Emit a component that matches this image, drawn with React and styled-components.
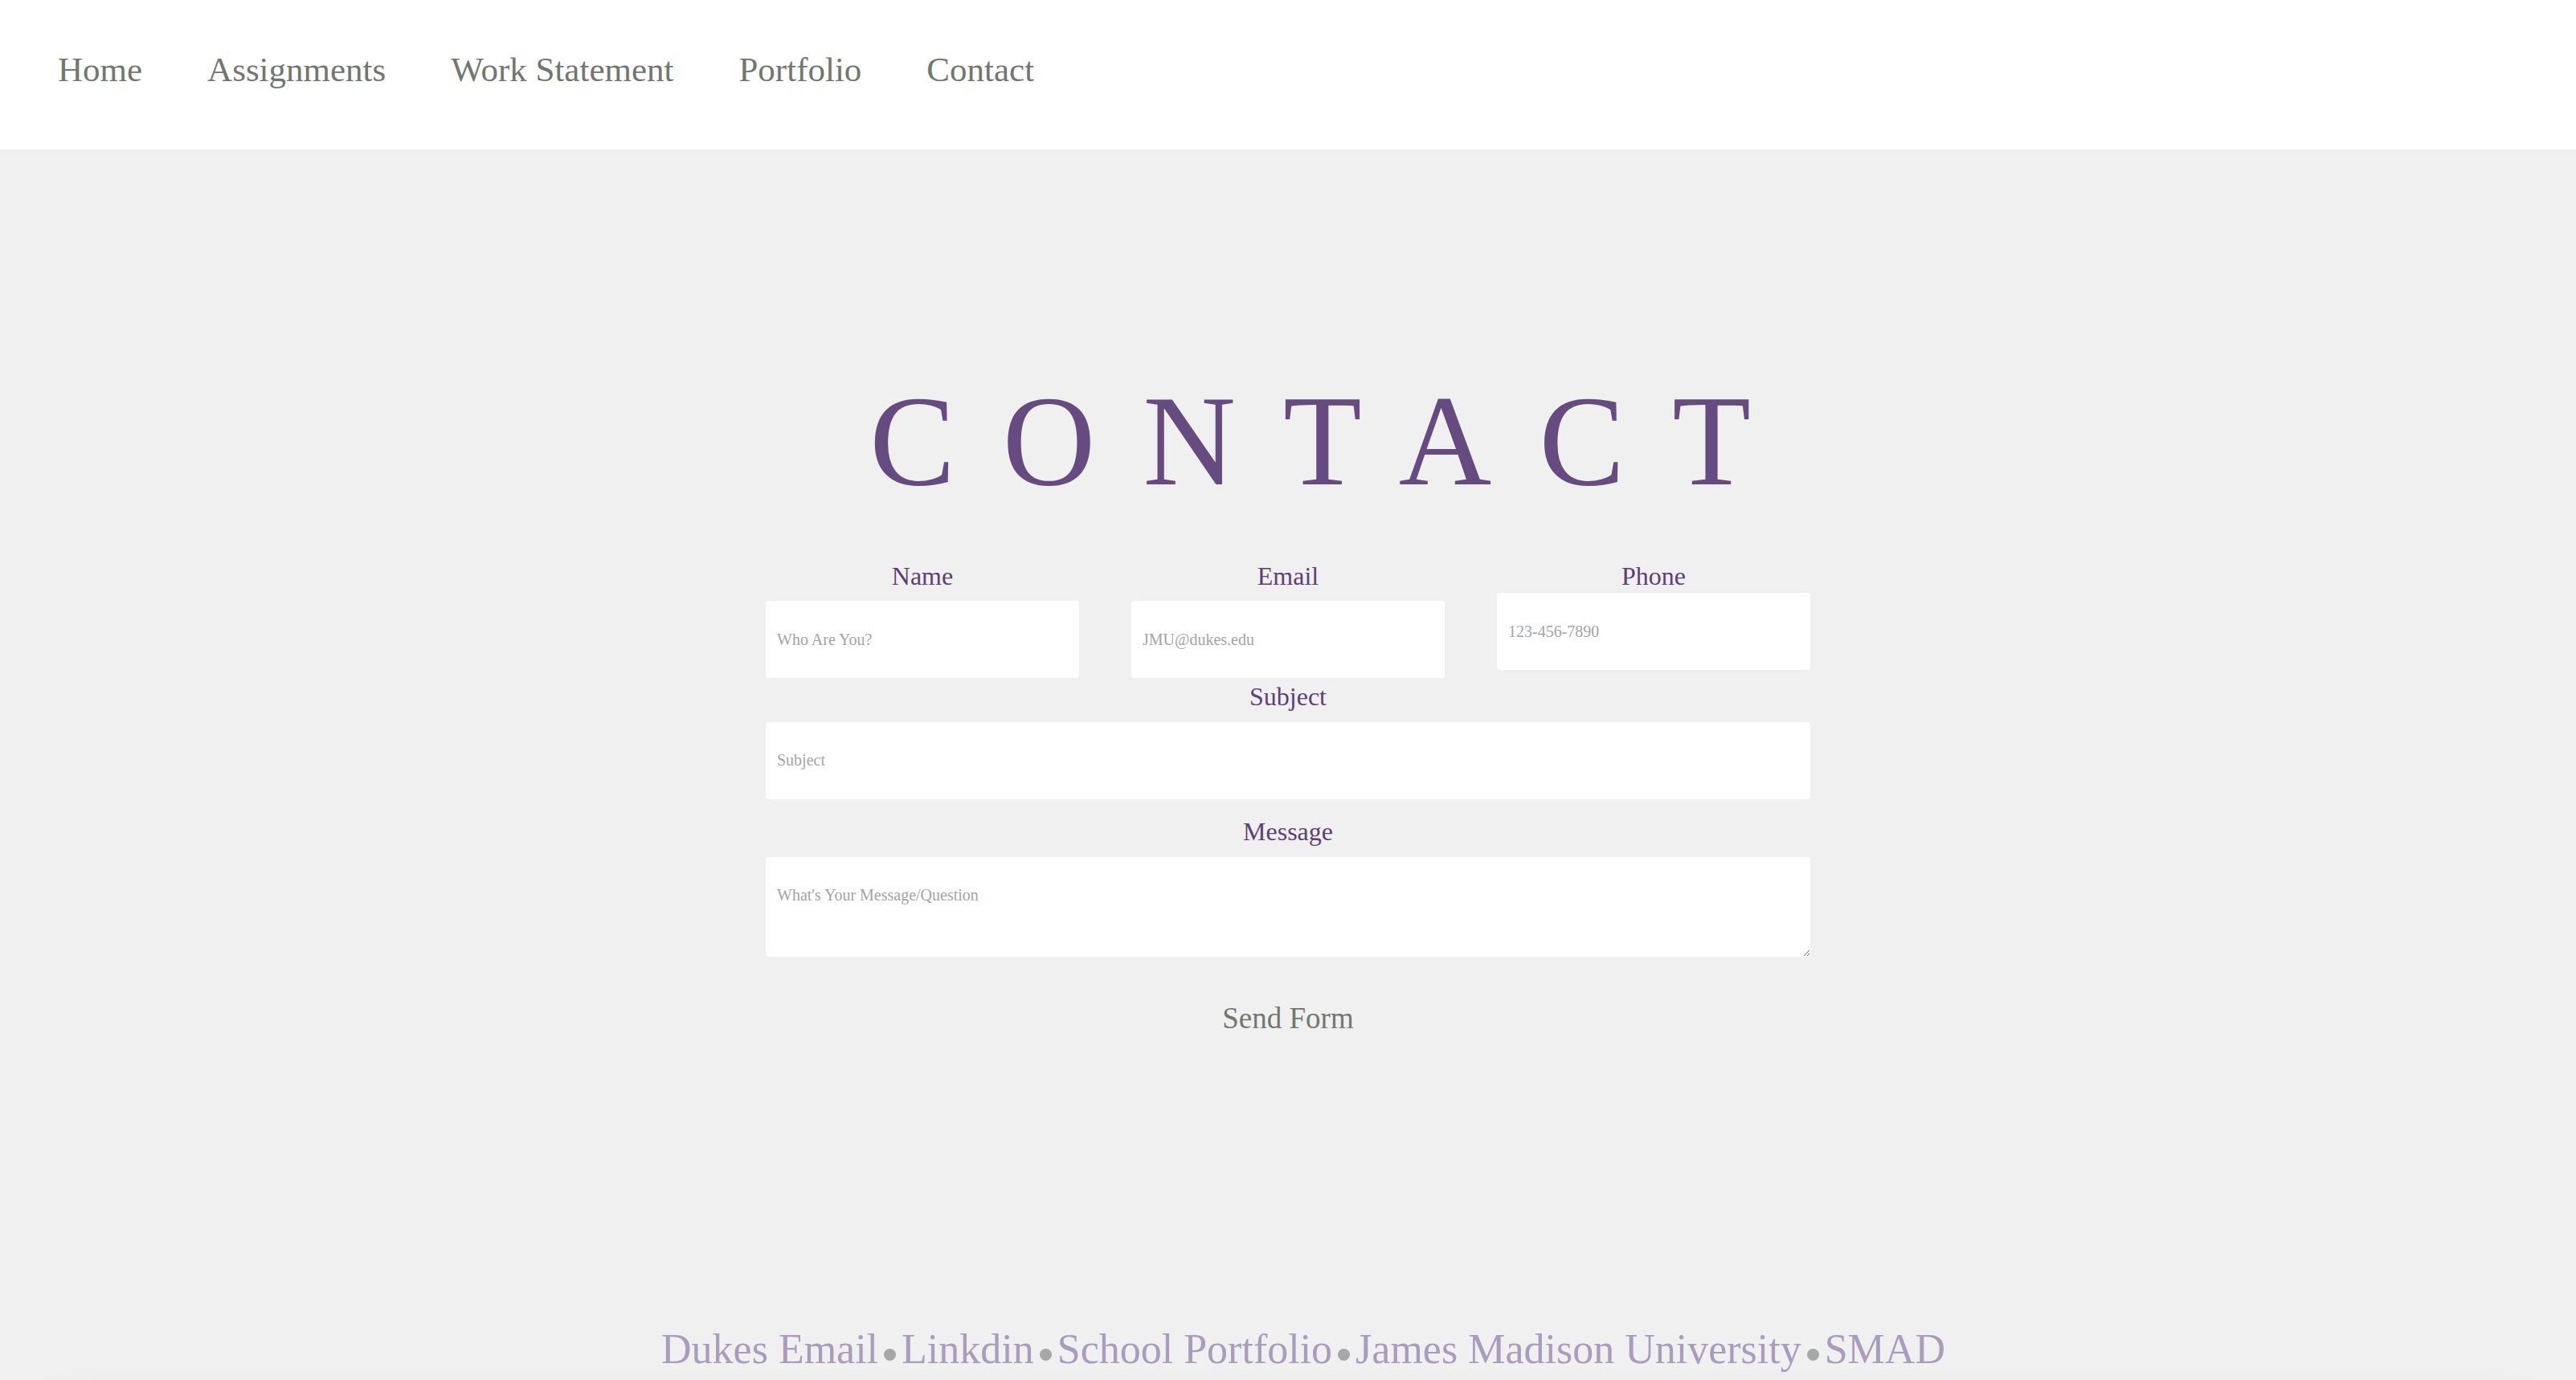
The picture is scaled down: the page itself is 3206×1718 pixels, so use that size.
import React from "react";
import styled, {createGlobalStyle} from "styled-components";

const GlobalStyle = createGlobalStyle`
body {
    margin: 0;
    background: #f0f0f0;
    font-family: "Liberation Serif", "Times New Roman", serif;
}
`;

const Nav = styled.nav`
display: flex;
align-items: center;
gap: 81px;
height: 186px;
padding: 0 0 14px 72px;
box-sizing: border-box;
background: #fff;
`;

const NavLink = styled.a`
font-size: 43px;
color: #71766f;
text-decoration: none;
cursor: pointer;
`;

const Title = styled.h1`
margin: 283px 0 0;
padding-left: 114px;
text-align: center;
font-size: 160px;
font-weight: normal;
line-height: 160px;
letter-spacing: 59px;
color: #654b80;
`;

const Form = styled.form`
display: flex;
flex-direction: column;
width: 1300px;
margin: 69px auto 0;
`;

const Row = styled.div`
display: grid;
grid-template-columns: repeat(3, 1fr);
column-gap: 65px;
`;

const Field = styled.div`
display: flex;
flex-direction: column;
margin-top: ${p => p.$top || 0}px;
`;

const Label = styled.label`
font-size: 32px;
line-height: 1.2;
text-align: center;
color: #5b4176;
`;

const Input = styled.input`
height: 96px;
margin-top: ${p => p.$gap ?? 12}px;
padding: 0 14px;
box-sizing: border-box;
border: none;
border-radius: 4px;
background: #fff;
font-family: inherit;
font-size: 20px;
outline: none;

&::placeholder {
    color: #a4a4a4;
}
`;

const TextArea = styled.textarea`
display: block;
height: 124px;
margin-top: 13px;
padding: 36px 14px 10px;
box-sizing: border-box;
border: none;
border-radius: 4px;
background: #fff;
font-family: inherit;
font-size: 20px;
resize: vertical;
outline: none;

&::placeholder {
    color: #a4a4a4;
}
`;

const SendButton = styled.button`
align-self: center;
margin-top: 55px;
padding: 0;
border: none;
background: none;
font-family: inherit;
font-size: 37px;
line-height: 1.2;
color: #72776f;
cursor: pointer;
`;

const Footer = styled.footer`
margin-top: 358px;
padding-left: 38px;
text-align: center;
font-size: 52px;
line-height: 1.2;
color: #aa9cbc;
white-space: nowrap;
`;

const Dot = styled.span`
display: inline-block;
width: 15px;
height: 15px;
margin: 0 7px 0 7px;
border-radius: 50%;
background: #a5a7a8;
vertical-align: 3px;
`;

const Shade = styled.div`
height: 200px;
margin: 24px 30px 0;
border-radius: 60px;
box-shadow: 0 -6px 40px rgba(0, 0, 0, 0.035);
`;

const links = ["Dukes Email", "Linkdin", "School Portfolio", "James Madison University", "SMAD"];

const TextField = ({name, text, placeholder, top, gap}) => (
    <Field $top={top}>
        <Label htmlFor={name}>{text}</Label>
        <Input id={name} name={name} placeholder={placeholder} $gap={gap}/>
    </Field>
);

export default function App() {
    return <>
        <GlobalStyle/>
        <Nav>
            {["Home", "Assignments", "Work Statement", "Portfolio", "Contact"].map(l =>
                <NavLink key={l}>{l}</NavLink>)}
        </Nav>
        <Title>CONTACT</Title>
        <Form onSubmit={e => e.preventDefault()}>
            <Row>
                <TextField name="name" text="Name" placeholder="Who Are You?"/>
                <TextField name="email" text="Email" placeholder="JMU@dukes.edu"/>
                <TextField name="phone" text="Phone" placeholder="123-456-7890" gap={2}/>
            </Row>
            <TextField name="subject" text="Subject" placeholder="Subject" top={4}/>
            <Field $top={21}>
                <Label htmlFor="message">Message</Label>
                <TextArea id="message" name="message" placeholder="What's Your Message/Question"/>
            </Field>
            <SendButton type="submit">Send Form</SendButton>
        </Form>
        <Footer>
            {links.map((l, i) => <React.Fragment key={l}>
                {i > 0 && <Dot/>}
                {l}
            </React.Fragment>)}
        </Footer>
        <Shade/>
    </>;
}
